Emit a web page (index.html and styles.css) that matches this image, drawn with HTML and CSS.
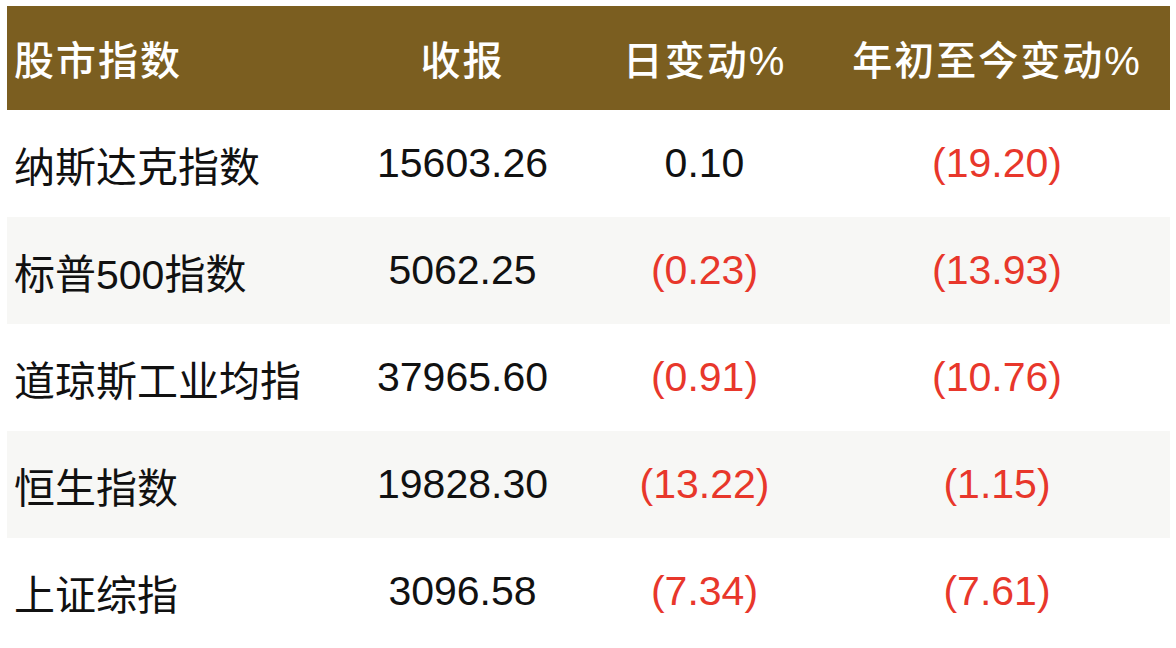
FILE: index.html
```html
<!DOCTYPE html>
<html lang="zh">
<head>
<meta charset="utf-8">
<link rel="stylesheet" href="styles.css">
</head>
<body>
<div class="table">
  <div class="row head">
    <div class="cell name">股市指数</div>
    <div class="cell">收报</div>
    <div class="cell">日变动%</div>
    <div class="cell">年初至今变动%</div>
  </div>
  <div class="row">
    <div class="cell name">纳斯达克指数</div>
    <div class="cell">15603.26</div>
    <div class="cell">0.10</div>
    <div class="cell neg">(19.20)</div>
  </div>
  <div class="row alt">
    <div class="cell name">标普500指数</div>
    <div class="cell">5062.25</div>
    <div class="cell neg">(0.23)</div>
    <div class="cell neg">(13.93)</div>
  </div>
  <div class="row">
    <div class="cell name">道琼斯工业均指</div>
    <div class="cell">37965.60</div>
    <div class="cell neg">(0.91)</div>
    <div class="cell neg">(10.76)</div>
  </div>
  <div class="row alt">
    <div class="cell name">恒生指数</div>
    <div class="cell">19828.30</div>
    <div class="cell neg">(13.22)</div>
    <div class="cell neg">(1.15)</div>
  </div>
  <div class="row">
    <div class="cell name">上证综指</div>
    <div class="cell">3096.58</div>
    <div class="cell neg">(7.34)</div>
    <div class="cell neg">(7.61)</div>
  </div>
</div>
</body>
</html>
```
FILE: styles.css
```css
html, body {
  margin: 0;
  padding: 0;
  background: #ffffff;
}
body {
  padding: 6px 6px 0 7px;
  font-family: "Liberation Sans", "Noto Sans CJK SC", sans-serif;
  color: #111111;
}
.table {
  width: 1163px;
  display: flex;
  flex-direction: column;
}
.row {
  display: grid;
  grid-template-columns: 333px 245px 239px 346px;
  height: 107px;
  align-items: center;
  font-size: 41px;
}
.row.head {
  height: 104px;
  background: #7b5e20;
  color: #ffffff;
  font-size: 40px;
  font-weight: 500;
  letter-spacing: 2px;
}
.row.alt {
  background: #f7f7f5;
}
.cell {
  text-align: center;
  white-space: nowrap;
}
.cell.name {
  text-align: left;
  padding-left: 7px;
}
.neg {
  color: #e8372b;
}
```
